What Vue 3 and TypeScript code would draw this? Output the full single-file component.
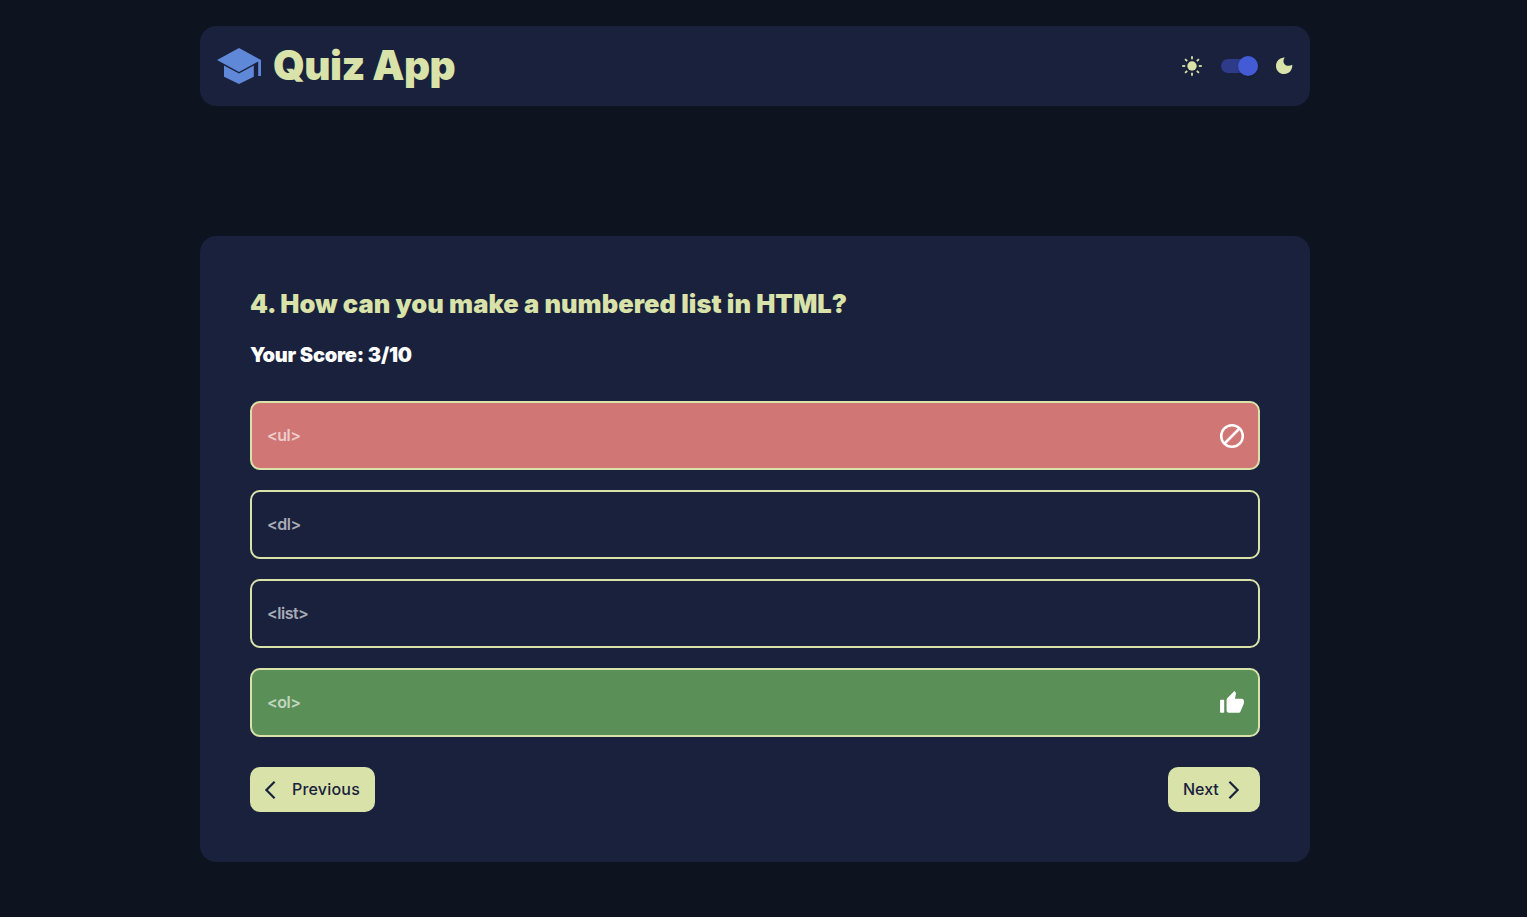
<script setup lang="ts">
interface Answer {
  text: string
  state?: 'wrong' | 'correct'
}

const question = '4. How can you make a numbered list in HTML?'
const score = 'Your Score: 3/10'
const answers: Answer[] = [
  { text: '<ul>', state: 'wrong' },
  { text: '<dl>' },
  { text: '<list>' },
  { text: '<ol>', state: 'correct' },
]
const rays = [0, 45, 90, 135, 180, 225, 270, 315]
</script>

<template>
  <div class="page">
    <header class="header">
      <div class="brand">
        <svg class="cap" viewBox="0 0 48 48">
          <path d="M24 6 2 18l22 12 19.2-10.5V34H46V18z" />
          <path d="M9 23.4v11.3L24 42l14.8-7.3V23.4L24 31.5z" />
        </svg>
        <h1 class="title">Quiz App</h1>
      </div>
      <div class="theme">
        <svg class="sun" viewBox="0 0 20 20">
          <circle cx="10" cy="10" r="4.7" />
          <path
            v-for="angle in rays"
            :key="angle"
            d="M10 .2V3.2"
            :transform="`rotate(${angle} 10 10)`"
          />
        </svg>
        <button class="switch" type="button" aria-label="Dark mode"><span class="thumb"></span></button>
        <svg class="moon" viewBox="0 0 20 20">
          <path
            d="M10.8 1.5C9 4 9 6.5 10.6 8.2c1.7 1.8 4.9 2.1 7.7.5C18.5 14 15 18 10.2 18 5.5 18 2 14.4 2 9.9 2 5.2 5.6 1.4 10.8 1.5z"
          />
        </svg>
      </div>
    </header>

    <main class="card">
      <h2 class="question">{{ question }}</h2>
      <h3 class="score">{{ score }}</h3>
      <ul class="answers">
        <li v-for="answer in answers" :key="answer.text" class="answer" :class="answer.state">
          <span class="label">{{ answer.text }}</span>
          <svg v-if="answer.state === 'wrong'" class="mark" viewBox="0 0 26 26">
            <circle cx="13" cy="13" r="10.8" fill="none" stroke="#fff" stroke-width="2.5" />
            <path d="M5.5 20.5 20.5 5.5" stroke="#fff" stroke-width="2.5" />
          </svg>
          <svg v-else-if="answer.state === 'correct'" class="mark" viewBox="0 0 24 24">
            <path
              fill="#fff"
              d="M1.6 21h2.6c.4 0 .6-.2.6-.6V9.6c0-.4-.2-.6-.6-.6H1.6c-.4 0-.6.2-.6.6v10.8c0 .4.2.6.6.6zm21.4-11c0-1.1-.9-2-2-2h-6.31l.95-4.57.03-.32c0-.41-.17-.79-.44-1.06L14.17 1 7.59 7.59C7.22 7.95 7 8.45 7 9v10c0 1.1.9 2 2 2h9c.83 0 1.54-.5 1.84-1.22l3.02-7.05c.09-.23.14-.47.14-.73v-2z"
            />
          </svg>
        </li>
      </ul>
      <div class="actions">
        <button class="nav previous" type="button">
          <svg class="chevron" viewBox="0 0 12 20"><path d="M10.6 1.8 2.4 10l8.2 8.2" /></svg>
          <span class="nav-text">Previous</span>
        </button>
        <button class="nav next" type="button">
          <span class="nav-text">Next</span>
          <svg class="chevron" viewBox="0 0 12 20"><path d="M1.4 1.8 9.6 10l-8.2 8.2" /></svg>
        </button>
      </div>
    </main>
  </div>
</template>

<style>
body {
  background: #0d131f;
}
</style>

<style scoped>
.page {
  box-sizing: border-box;
  width: 1510px;
  height: 917px;
  padding: 26px 200px 0;
  overflow: hidden;
  color: #fff;
  font-family: Inter, 'Open Sans', sans-serif;
}
h1,
h2,
h3,
ul {
  margin: 0;
  padding: 0;
}
.header {
  display: flex;
  justify-content: space-between;
  align-items: center;
  box-sizing: border-box;
  height: 80px;
  padding: 0 16px 0 15px;
  border-radius: 16px;
  background: #19213d;
}
.brand,
.theme {
  display: flex;
  align-items: center;
}
.cap {
  width: 48px;
  height: 48px;
  fill: #6088d8;
}
.title {
  margin-left: 10px;
  color: #d9e3a9;
  font-size: 40.5px;
  font-weight: 900;
  line-height: 60px;
  letter-spacing: -0.55px;
}
.sun {
  width: 20px;
  height: 20px;
  fill: #d9e3a9;
  stroke: #d9e3a9;
}
.sun circle {
  stroke: none;
}
.sun path {
  stroke-width: 1.8;
}
.switch {
  display: flex;
  justify-content: flex-end;
  align-items: center;
  width: 37px;
  height: 14px;
  margin: 0 16px 0 19px;
  padding: 0;
  border: 0;
  border-radius: 7px;
  background: #2e3b88;
}
.thumb {
  flex: none;
  width: 20px;
  height: 20px;
  border-radius: 50%;
  background: #435bd5;
  box-shadow: 0 1px 2px rgba(0, 0, 0, 0.25);
}
.moon {
  width: 20px;
  height: 20px;
  fill: #d9e3a9;
}
.card {
  box-sizing: border-box;
  height: 626px;
  margin-top: 130px;
  padding: 50px;
  border-radius: 16px;
  background: #19213d;
}
.question {
  color: #d9e3a9;
  font-size: 25.5px;
  font-weight: 900;
  line-height: 36px;
  letter-spacing: 0.05px;
  white-space: nowrap;
}
.score {
  margin-top: 18px;
  font-size: 20px;
  font-weight: 900;
  line-height: 30px;
  letter-spacing: -0.22px;
}
.answers {
  display: grid;
  gap: 20px;
  margin-top: 31px;
  list-style: none;
}
.answer {
  display: flex;
  justify-content: space-between;
  align-items: center;
  box-sizing: border-box;
  height: 69px;
  padding: 0 13px 0 15px;
  border: 2px solid #d9e3a9;
  border-radius: 10px;
}
.wrong {
  background: #d07674;
}
.correct {
  background: #5a9057;
}
.label {
  margin-bottom: 2px;
  color: rgba(255, 255, 255, 0.64);
  font-size: 16px;
  font-weight: 600;
  line-height: 24px;
  letter-spacing: -0.5px;
}
.mark {
  width: 26px;
  height: 26px;
}
.actions {
  display: flex;
  justify-content: space-between;
  margin-top: 30px;
}
.nav {
  display: flex;
  align-items: center;
  height: 45px;
  padding: 0;
  border: 0;
  border-radius: 10px;
  background: #d9e3a9;
  color: #19213d;
  font: 500 16px/24px Inter, 'Open Sans', sans-serif;
}
.nav-text {
  margin-bottom: 1px;
}
.previous {
  gap: 16px;
  width: 125px;
  padding-left: 14px;
  letter-spacing: 0.2px;
}
.next {
  justify-content: space-between;
  width: 92px;
  padding: 0 20px 0 15px;
}
.chevron {
  flex: none;
  width: 12px;
  height: 20px;
  fill: none;
  stroke: #19213d;
  stroke-width: 2.2;
}
</style>
